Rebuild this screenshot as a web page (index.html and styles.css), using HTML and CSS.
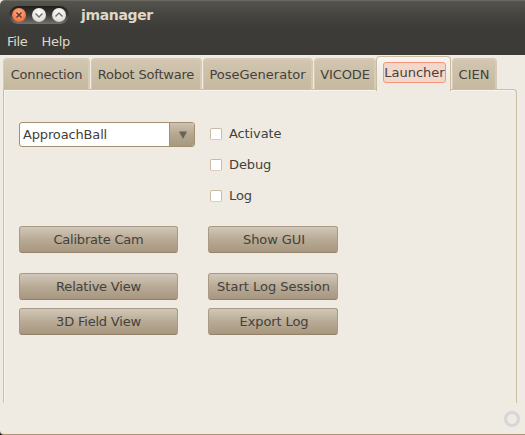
FILE: index.html
```html
<!DOCTYPE html>
<html lang="en">
<head>
<meta charset="utf-8">
<title>jmanager</title>
<link rel="stylesheet" href="styles.css">
</head>
<body>
<div class="window">
  <header class="chrome">
    <div class="titlebar">
      <div class="controls">
        <span class="control close"><svg viewBox="0 0 14 14"><path d="M4.5 4.5l5 5M9.5 4.5l-5 5"/></svg></span>
        <span class="control"><svg viewBox="0 0 14 14"><path d="M3.5 5.5L7 9l3.5-3.5"/></svg></span>
        <span class="control"><svg viewBox="0 0 14 14"><path d="M3.5 8.5L7 5l3.5 3.5"/></svg></span>
      </div>
      <h1>jmanager</h1>
    </div>
    <nav class="menu"><span>File</span><span>Help</span></nav>
  </header>
  <div class="tabs">
    <div class="tab connection">Connection</div>
    <div class="tab robot">Robot Software</div>
    <div class="tab pose">PoseGenerator</div>
    <div class="tab vicode">VICODE</div>
    <div class="tab active"><span>Launcher</span></div>
    <div class="tab cien">CIEN</div>
  </div>
  <main class="panel">
    <div class="options">
      <div class="combo"><span class="value">ApproachBall</span><span class="arrow"><svg viewBox="0 0 8 8"><path d="M0 .5h8L4 8z"/></svg></span></div>
      <div class="checks">
        <label><i></i>Activate</label>
        <label><i></i>Debug</label>
        <label><i></i>Log</label>
      </div>
    </div>
    <div class="actions">
      <button class="tight">Calibrate Cam</button><button>Show GUI</button>
      <button class="tight">Relative View</button><button class="wide">Start Log Session</button>
      <button class="tight">3D Field View</button><button>Export Log</button>
    </div>
  </main>
  <footer class="status"><span class="ring"></span></footer>
</div>
</body>
</html>
```
FILE: styles.css
```css
* { box-sizing: border-box; }
html { background: #18100f; }
body {
  margin: 0;
  font: 13px/16px "DejaVu Sans", sans-serif;
  color: #44413b;
}
.window {
  width: 525px;
  height: 435px;
  background: #f0ebe2;
  border-bottom: 1px solid #a89574;
  border-bottom-left-radius: 4px;
  display: flex;
  flex-direction: column;
  overflow: hidden;
}
.chrome {
  height: 55px;
  flex: none;
  background: linear-gradient(#55544e 0, #45443f 14px, #3c3b37 28px);
  border-top: 1px solid #6a685f;
  border-top-left-radius: 5px;
  color: #dfd8c8;
}
.titlebar { height: 29px; display: flex; padding: 5px 0 0 9px; }
.controls {
  width: 60px;
  height: 18px;
  border-radius: 9px;
  background: linear-gradient(#1f1e1b, #3c3b37 50%, #74736c);
  display: flex;
  gap: 6px;
  padding: 2px 3px;
}
.control {
  width: 14px;
  height: 14px;
  border-radius: 50%;
  background: radial-gradient(circle at 50% 35%, #fff, #e5e2dc 60%, #b8b3aa);
}
.control.close { background: radial-gradient(circle at 50% 35%, #ffb08c, #f47b4b 60%, #d6511f); }
.control svg { display: block; width: 14px; height: 14px; fill: none; stroke: #74716b; stroke-width: 1.5; }
.control.close svg { stroke: #61372a; }
h1 { margin: 1px 0 0 12px; font-size: 14px; line-height: 17px; letter-spacing: -0.35px; }
.menu { display: flex; gap: 14px; padding: 4px 0 0 7px; letter-spacing: -0.3px; }
.tabs { height: 34px; flex: none; display: flex; align-items: flex-end; padding-left: 3px; }
.tab {
  height: 31px;
  margin-right: 1px;
  border: 1px solid #d7cbb7;
  border-width: 2px 2px 0 1px;
  border-radius: 4px 4px 0 0;
  background: linear-gradient(#d1c6b1, #c5b89e);
  text-align: center;
  padding-top: 7px;
  white-space: nowrap;
}
.connection { width: 87px; letter-spacing: -0.2px; padding-left: 1px; }
.robot { width: 111px; letter-spacing: -0.2px; }
.pose { width: 110px; }
.vicode { width: 62px; margin-right: 0; letter-spacing: -0.1px; padding-left: 1px; }
.cien { width: 45px; }
.tab.active {
  width: 75px;
  height: 35px;
  margin-bottom: -2px;
  padding: 5px 0 0;
  border: 1px solid #cabc9f;
  border-width: 1px 1px 0;
  background: linear-gradient(#f7f4ef, #f0ebe2 25px);
  position: relative;
}
.active span {
  display: block;
  width: 63px;
  height: 21px;
  margin-left: 6px;
  border: 1px solid #fa957c;
  border-radius: 3px;
  background: #f3d7ca;
  line-height: 19px;
}
.panel {
  width: 514px;
  height: 314px;
  flex: none;
  margin-left: 3px;
  border: 1px solid #cabea4;
  border-bottom: 0;
  border-top-right-radius: 4px;
  box-shadow: inset 1px 1px #f7f4ee;
  padding: 32px 0 0 15px;
}
.options { display: flex; height: 104px; gap: 15px; }
.combo {
  width: 176px;
  height: 25px;
  display: flex;
  border: 1px solid #a18e73;
  border-radius: 3px;
  background: #fff;
  overflow: hidden;
}
.value { width: 149px; padding: 4px 0 0 3px; letter-spacing: -0.15px; }
.arrow {
  flex: 1;
  border-left: 1px solid #a18e73;
  background: linear-gradient(#cdc2b1, #b5a68e 50%, #a79880);
  display: flex;
  align-items: center;
  justify-content: center;
}
.arrow svg { width: 8px; height: 8px; margin-left: 1px; fill: #66625a; }
.checks label { display: flex; height: 31px; align-items: flex-start; padding-top: 4px; letter-spacing: -0.1px; }
.checks i {
  width: 12px;
  height: 12px;
  margin: 2px 7px 0 0;
  border: 1px solid #c9bca5;
  border-bottom-color: #d9cfbf;
  border-radius: 2px;
  background: #fff;
}
.actions {
  display: grid;
  grid-template-columns: 159px 130px;
  grid-template-rows: 47px 35px 27px;
  column-gap: 30px;
}
button {
  height: 27px;
  border: 1px solid #a89a85;
  border-bottom-color: #93816a;
  border-radius: 3px;
  background: linear-gradient(#d2c8b9, #b8aa95 50%, #a79780);
  padding: 0 0 0 2px;
  color: inherit;
  font: inherit;
  letter-spacing: -0.1px;
}
.tight { letter-spacing: -0.2px; padding-left: 0; }
.wide { letter-spacing: 0; padding-left: 1px; }
.status { flex: 1; display: flex; justify-content: flex-end; padding: 8px 5px 0 0; }
.ring { width: 16px; height: 16px; border: 3px solid #d5d6da; border-radius: 50%; }
```
